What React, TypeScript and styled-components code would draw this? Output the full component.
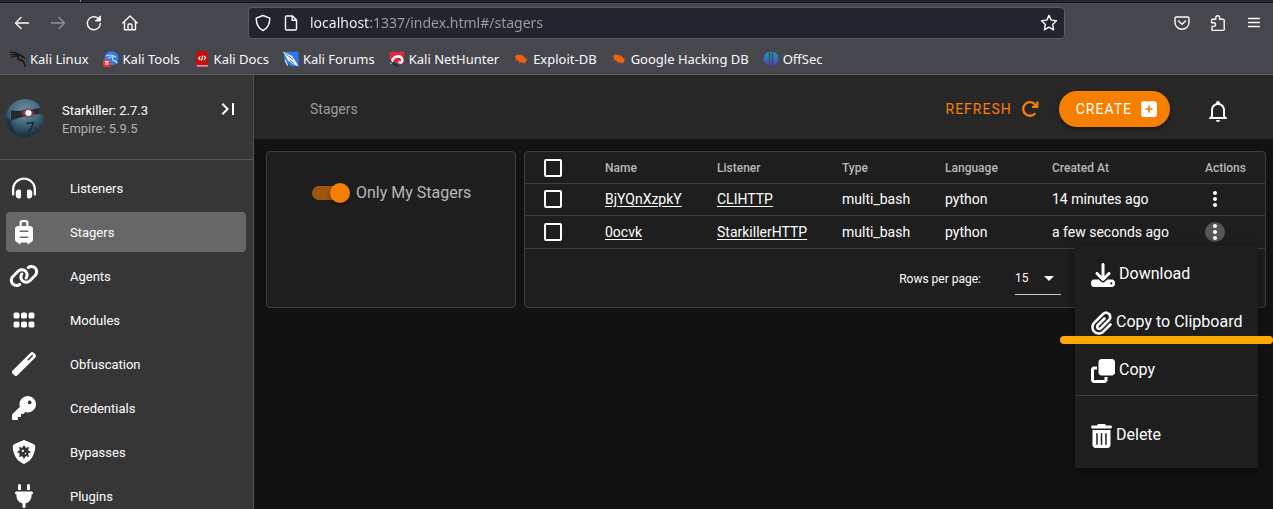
import React from "react";
import styled, { createGlobalStyle, css } from "styled-components";
import {
  FaArrowRotateRight,
  FaClone,
  FaDownload,
  FaGrip,
  FaHeadphonesSimple,
  FaKey,
  FaLink,
  FaPaperclip,
  FaPlug,
  FaShieldVirus,
  FaSquarePlus,
  FaSuitcaseRolling,
  FaTrashCan,
  FaWandMagic,
} from "react-icons/fa6";
import { MdLastPage, MdMoreVert, MdArrowDropDown } from "react-icons/md";

const orange = "#f77f00";
const line = "#3e3e3e";
const surface = "#1e1e1e";

const GlobalStyle = createGlobalStyle`
  *, *::before, *::after { box-sizing: border-box; }
  body {
    margin: 0;
    background: #121212;
    color: #fff;
    font-family: Roboto, "Liberation Sans", sans-serif;
    font-size: 14px;
  }
  button, input, select { font: inherit; color: inherit; }
  button { border: 0; padding: 0; background: none; cursor: pointer; }
  svg { display: block; flex: none; }
`;

/* ---------- window ---------- */

const Window = styled.div`
  display: flex;
  flex-direction: column;
  height: 100vh;
  overflow: hidden;
`;

const Browser = styled.header`
  flex: none;
  background: #45474d;
  border-bottom: 1px solid #5c5d61;
  color: #fbfbfe;
  font-family: "Noto Sans", sans-serif;
`;

const TabStrip = styled.div`
  height: 3px;
  padding-left: 80px;
  background: #23252e;
  border-bottom: 1px solid #17181d;
`;

const TabEdge = styled.div`
  width: 1px;
  height: 2px;
  background: #8a8b90;
`;

const NavBar = styled.div`
  display: flex;
  align-items: center;
  height: 40px;
  padding: 0 1px 0 4px;
`;

const NavButton = styled.button<{ $dim?: boolean }>`
  display: grid;
  place-items: center;
  width: 36px;
  height: 32px;
  opacity: ${(p) => (p.$dim ? 0.4 : 1)};
`;

const UrlBar = styled.div`
  display: flex;
  align-items: center;
  flex: 1;
  min-width: 0;
  height: 32px;
  margin: 0 99px 0 100px;
  padding: 0 6px 0 5px;
  gap: 10px;
  background: #23252e;
  border: 1px solid #5c5d62;
  border-radius: 4px;
`;

const UrlInput = styled.input`
  flex: 1;
  min-width: 0;
  padding: 0;
  border: 0;
  outline: 0;
  font-size: 14px;
  line-height: 20px;
  color: transparent;
  background: linear-gradient(90deg, #fbfbfe 60px, #9d9ea3 60px);
  background-clip: text;
  -webkit-background-clip: text;
`;

const Bookmarks = styled.nav`
  display: flex;
  align-items: center;
  gap: 14px;
  height: 31px;
  padding: 0 10px;
`;

const Bookmark = styled.a`
  display: flex;
  align-items: center;
  gap: 4px;
  color: inherit;
  font-size: 13px;
  line-height: 18px;
  text-decoration: none;
  white-space: nowrap;
`;

/* ---------- application ---------- */

const Shell = styled.div`
  display: flex;
  flex: 1;
  min-height: 0;
`;

const Sidebar = styled.aside`
  flex: none;
  width: 254px;
  overflow: hidden;
  background: #363636;
  border-right: 1px solid #525252;
`;

const Brand = styled.div`
  display: flex;
  align-items: flex-start;
  height: 85px;
  padding: 22px 13px 0 6px;
  border-bottom: 1px solid #555;
`;

const BrandMark = styled.div`
  padding-top: 2px;
`;

const BrandText = styled.div`
  flex: 1;
  padding: 5px 0 0 18px;
  font-size: 13px;
  line-height: 18px;
`;

const BrandSub = styled.div`
  color: #b0b0b0;
`;

const NavList = styled.nav`
  display: flex;
  flex-direction: column;
  gap: 4px;
  padding: 8px 7px 8px 6px;
`;

const NavItem = styled.a<{ $active?: boolean }>`
  display: grid;
  grid-template-columns: 36px 1fr;
  align-items: center;
  column-gap: 28px;
  height: 40px;
  border-radius: 4px;
  color: #fff;
  font-size: 13px;
  text-decoration: none;
  background: ${(p) => (p.$active ? "#676767" : "transparent")};
  svg {
    width: 30px;
    height: 24px;
    justify-self: center;
  }
`;

const Main = styled.main`
  flex: 1;
  min-width: 0;
`;

const AppBar = styled.div`
  display: flex;
  align-items: center;
  height: 64px;
  padding: 4px 43px 0 56px;
  background: #272727;
`;

const Title = styled.h1`
  flex: 1;
  margin: 0;
  color: #9a9a9a;
  font-size: 14px;
  font-weight: 400;
`;

const ActionButton = styled.button<{ $filled?: boolean }>`
  display: flex;
  align-items: center;
  gap: 9px;
  height: 36px;
  font-size: 14px;
  letter-spacing: 1px;
  color: ${orange};
  svg {
    width: 18px;
    height: 18px;
  }
  ${(p) =>
    p.$filled &&
    css`
      margin: 0 36px 0 20px;
      padding: 0 13px 0 17px;
      border-radius: 18px;
      background: ${orange};
      color: #fff;
      box-shadow: 0 2px 4px rgba(0, 0, 0, 0.4);
      svg { width: 16px; }
    `}
`;

const BellButton = styled.button`
  padding-top: 4px;
`;

const Content = styled.div`
  display: grid;
  grid-template-columns: 250px minmax(0, 1fr);
  gap: 8px;
  padding: 12px 7px 12px 12px;
`;

const Card = styled.section`
  background: ${surface};
  border: 1px solid ${line};
  border-radius: 4px;
`;

const SwitchLabel = styled.label`
  display: flex;
  align-items: center;
  gap: 6px;
  padding: 30px 0 0 45px;
  color: #b8b8b8;
  font-size: 16px;
  line-height: 21px;
`;

const Switch = styled.input`
  appearance: none;
  display: flex;
  align-items: center;
  justify-content: flex-end;
  width: 38px;
  height: 20px;
  margin: 0;
  &::before {
    content: "";
    flex: 1;
    height: 14px;
    margin-right: -10px;
    border-radius: 7px;
    background: #9c560f;
  }
  &::after {
    content: "";
    z-index: 1;
    width: 20px;
    height: 20px;
    border-radius: 50%;
    background: ${orange};
    box-shadow: 0 2px 4px rgba(0, 0, 0, 0.4);
  }
`;

const Table = styled.table`
  width: 100%;
  table-layout: fixed;
  border-collapse: collapse;
  line-height: 20px;
  th, td {
    height: 32px;
    padding: 0 0 0 16px;
    border-bottom: 1px solid ${line};
    text-align: left;
    white-space: nowrap;
  }
  th {
    height: 31px;
    padding-top: 2px;
    color: #b8b8b8;
    font-size: 12px;
    font-weight: 500;
  }
  tr:last-child td { height: 33px; }
`;

const Check = styled.input`
  appearance: none;
  display: block;
  width: 18px;
  height: 18px;
  margin: 0 0 0 3px;
  border: 2px solid #fff;
  border-radius: 2px;
`;

const CellLink = styled.a`
  color: #fff;
  text-decoration: underline;
  text-underline-offset: 2px;
`;

const Actions = styled.div`
  position: relative;
  width: 20px;
  height: 20px;
`;

const DotsButton = styled.button<{ $open?: boolean }>`
  display: grid;
  place-content: center;
  width: 20px;
  height: 20px;
  border-radius: 50%;
  background: ${(p) => (p.$open ? "#565656" : "transparent")};
`;

const Menu = styled.ul`
  position: absolute;
  z-index: 2;
  top: calc(100% + 3px);
  right: -33px;
  width: 183px;
  margin: 0;
  padding: 5px 0 9px;
  list-style: none;
  background: ${surface};
  box-shadow: 0 3px 10px rgba(0, 0, 0, 0.45);
`;

const MenuRow = styled.li<{ $divided?: boolean }>`
  position: relative;
  ${(p) =>
    p.$divided &&
    css`
      margin-top: 1px;
      padding-top: 15px;
      border-top: 1px solid ${line};
    `}
`;

const MenuButton = styled.button<{ $narrow?: boolean }>`
  display: flex;
  align-items: center;
  gap: 4px;
  width: 100%;
  height: 48px;
  padding: 0 0 0 16px;
  font-size: 16px;
  line-height: 24px;
  svg {
    width: ${(p) => (p.$narrow ? 21 : 24)}px;
    height: 24px;
    margin-top: 2px;
  }
`;

const Marker = styled.span`
  position: absolute;
  z-index: 1;
  left: -15px;
  right: -15px;
  bottom: 2px;
  height: 8px;
  border-radius: 4px;
  background: #ffa802;
`;

const TableFooter = styled.div`
  display: flex;
  align-items: center;
  justify-content: flex-end;
  gap: 34px;
  height: 58px;
  padding: 2px 204px 0 0;
  font-size: 12px;
`;

const SelectBox = styled.div`
  display: grid;
  align-items: center;
  width: 46px;
  height: 32px;
  border-bottom: 1px solid #c8c8c8;
  > * { grid-area: 1 / 1; }
  svg { justify-self: end; pointer-events: none; }
`;

const Select = styled.select`
  appearance: none;
  width: 100%;
  padding: 0;
  border: 0;
  outline: 0;
  background: transparent;
  option { background: ${surface}; }
`;

/* ---------- drawings ---------- */

const Stroke = ({ children, size = 18 }: { children: React.ReactNode; size?: number }) => (
  <svg
    width={size}
    height={size}
    viewBox="0 0 18 18"
    fill="none"
    stroke="currentColor"
    strokeWidth="1.4"
    strokeLinecap="round"
    strokeLinejoin="round"
    aria-hidden="true"
  >
    {children}
  </svg>
);

const BackIcon = () => <Stroke><path d="M15.5 9H2.5M8 3.5L2.5 9L8 14.5" /></Stroke>;
const ForwardIcon = () => <Stroke><path d="M2.5 9H15.5M10 3.5L15.5 9L10 14.5" /></Stroke>;
const ReloadIcon = () => (
  <Stroke>
    <path d="M15.3 9.5A6.5 6.5 0 1 1 13 4.3" />
    <path d="M15.5 2.2V7H10.7Z" fill="currentColor" strokeWidth="1" />
  </Stroke>
);
const HomeIcon = () => (
  <Stroke>
    <path d="M1.8 9L9 2L16.2 9M3.5 7.5V15.8H14.5V7.5M7 15.5V11.2Q7 10 8 10H10Q11 10 11 11.2V15.5" />
  </Stroke>
);
const ShieldIcon = () => (
  <Stroke><path d="M9 1.5L15.8 4.2C15.8 9.5 14.3 14 9 16.5C3.7 14 2.2 9.5 2.2 4.2Z" /></Stroke>
);
const PageIcon = () => (
  <Stroke><path d="M4.5 2H10.5L14.5 6V14.8Q14.5 16 13.3 16H4.7Q3.5 16 3.5 14.8V3Q3.5 2 4.5 2ZM10.2 2.2V6.3H14.3" /></Stroke>
);
const StarIcon = () => (
  <Stroke>
    <path d="M9 1.4L11.2 6.1L16.4 6.8L12.6 10.4L13.6 15.9L9 13.2L4.4 15.9L5.4 10.4L1.6 6.8L6.8 6.1Z" />
  </Stroke>
);
const PocketIcon = () => (
  <Stroke>
    <path d="M3.3 3H14.7Q16 3 16 4.3V8.5A7 6.8 0 0 1 2 8.5V4.3Q2 3 3.3 3Z" />
    <path d="M5.5 7L9 10.3L12.5 7" />
  </Stroke>
);
const PuzzleIcon = () => (
  <Stroke>
    <path d="M3 5.2H6.8V3.6A1.9 1.9 0 0 1 10.6 3.6V5.2H14.2Q15.2 5.2 15.2 6.2V15.4Q15.2 16.4 14.2 16.4H4Q3 16.4 3 15.4V12.4H4.8A1.7 1.7 0 0 0 4.8 8.8H2.6V6Q2.6 5.2 3.4 5.2" />
  </Stroke>
);
const BurgerIcon = () => <Stroke><path d="M3.5 4.5H14.5M3.5 8.5H14.5M3.5 12.5H14.5" strokeWidth="1.3" /></Stroke>;

const KaliDragon = () => (
  <svg width="16" height="16" viewBox="0 0 16 16" fill="none" stroke="#15161a" strokeLinecap="round">
    <path d="M.5 1.2Q5 .8 8.8 3.4M1 3.8Q4 2.6 8 4M1.5 6.2Q4 4.4 7.5 5" strokeWidth="1.2" />
    <path d="M7 3.5Q11 3.4 13.8 6.2M8.4 4.2Q6.5 7.8 10.4 8.9Q14.5 9.8 15 15.2" strokeWidth="1.6" />
    <path d="M11 5.2L15.2 7.2" strokeWidth="1.2" />
  </svg>
);
const KaliTools = () => (
  <svg width="16" height="16" viewBox="0 0 16 16">
    <circle cx="8.5" cy="7.2" r="7" fill="#2f7df0" />
    <path d="M3 5Q8 2.4 13 6.2M5 7.4Q8 5 10 6Q8.5 9 11 9.6Q13.6 10 14 12.5" fill="none" stroke="#cfe1fb" strokeWidth="1.1" />
    <rect x="0" y="8.5" width="7.5" height="7.5" rx="2.5" fill="#e53935" />
    <path d="M1.8 10.6H5.8M3 10.6V14M4.8 10.6V14" stroke="#fff" strokeWidth=".9" />
  </svg>
);
const KaliDocs = () => (
  <svg width="16" height="16" viewBox="0 0 16 16">
    <path d="M2 1.5Q2 .3 3.2 .3H14V15.7H3Q2 15.7 2 14.5Z" fill="#c50d0d" />
    <path d="M2.4 14.2H14V15.4H3Z" fill="#d9c9c9" />
    <path d="M6.4 5.5L4.6 7.3L6.4 9M10 5L11.7 6.8L10 8.8M8.8 4.6L7.5 9.6" fill="none" stroke="#fff" strokeWidth="1.1" />
  </svg>
);
const KaliForums = () => (
  <svg width="16" height="16" viewBox="0 0 16 16">
    <path d="M3 .8H15.5V15.2H8L1 9V3Z" fill="#2a7df0" />
    <path d="M0 .5L9 5L12 9.5L15.5 15.2L10 13L5 9.5L2.8 5.4Z" fill="#f4f6fa" />
    <path d="M2 2.4L10 8.5M6.5 9L11 12.4" stroke="#44474e" strokeWidth=".8" />
    <path d="M2.2 9L4.6 14.5" stroke="#e8ecf3" strokeWidth="1.1" />
  </svg>
);
const KaliHunter = () => (
  <svg width="16" height="16" viewBox="0 0 16 16">
    <path d="M1 .8H15.5L14.4 13H10L0 8Z" fill="#e0283a" />
    <path d="M2.4 12.6Q3.4 6 8.4 5.2Q13.4 5.2 13.4 9.6Q12.6 13 9.4 10.8" fill="none" stroke="#fff" strokeWidth="2.4" />
    <path d="M.8 9Q4 14 9.6 15" fill="none" stroke="#1f2026" strokeWidth="1.3" />
  </svg>
);
const BugIcon = () => (
  <svg width="16" height="16" viewBox="0 0 16 16">
    <path d="M1 5L5 6M4 2.5L7 5.5M9 3L9.5 6M1.5 9.5L5 8M6 13L8 10M12 13.5L11 10M15 8L12 8.5" stroke="#9c5a3c" strokeWidth=".9" />
    <ellipse cx="8" cy="7.8" rx="6" ry="3.4" transform="rotate(28 8 7.8)" fill="#f2600f" />
  </svg>
);
const OffSecIcon = () => (
  <svg width="16" height="16" viewBox="0 0 16 16">
    <defs>
      <linearGradient id="offsec" x1="0" y1="0" x2="0" y2="1">
        <stop offset="0" stopColor="#13a5b5" />
        <stop offset="1" stopColor="#5a35d0" />
      </linearGradient>
    </defs>
    <path d="M5.8 .8V14.5Q.6 12.5 .6 7.8Q.6 2.6 5.8 .8ZM7.2 .4H8.8V15.6H7.2ZM10.2 .8Q15.4 2.6 15.4 7.8Q15.4 12.5 10.2 14.5Z" fill="url(#offsec)" />
  </svg>
);

const Avatar = () => (
  <svg width="38" height="38" viewBox="0 0 38 38" role="img" aria-label="Starkiller">
    <defs>
      <radialGradient id="planet" cx=".5" cy=".3" r=".72">
        <stop offset="0" stopColor="#6c90a3" />
        <stop offset=".5" stopColor="#44697e" />
        <stop offset="1" stopColor="#152735" />
      </radialGradient>
      <radialGradient id="flare">
        <stop offset="0" stopColor="#ffe9e9" />
        <stop offset=".3" stopColor="#e0525c" />
        <stop offset=".6" stopColor="#8f2c3a" stopOpacity=".7" />
        <stop offset="1" stopColor="#5c2833" stopOpacity="0" />
      </radialGradient>
      <clipPath id="disc">
        <path d="M19 0A19 19 0 0 1 34.6 8L32.5 10L34 15.5L37.8 16.5A19 19 0 1 1 19 0Z" />
      </clipPath>
    </defs>
    <g clipPath="url(#disc)">
      <rect width="38" height="38" fill="url(#planet)" />
      <path d="M5 11.5Q18 13 34 9L34 15Q22 15.5 14 18.5L5 21.5Z" fill="#242833" />
      <path d="M0 17L5 21Q5 29 13 38H0Z" fill="#132736" opacity=".55" />
      <path d="M20 24.5L27.5 23.5L25.5 29L22 33" fill="none" stroke="#162a38" strokeWidth="1.5" />
      <circle cx="29.5" cy="29" r="1" fill="#162a38" />
      <ellipse cx="22" cy="14" rx="9" ry="5" fill="url(#flare)" />
      <circle cx="22.5" cy="14" r="3" fill="#fff" />
    </g>
  </svg>
);

const BellIcon = () => (
  <svg width="24" height="24" viewBox="0 0 24 24" fill="currentColor" aria-hidden="true">
    <path d="M10,21H14A2,2 0 0,1 12,23A2,2 0 0,1 10,21M21,19V20H3V19L5,17V11C5,7.9 7.03,5.17 10,4.29C10,4.19 10,4.1 10,4A2,2 0 0,1 12,2A2,2 0 0,1 14,4C14,4.1 14,4.19 14,4.29C16.97,5.17 19,7.9 19,11V17L21,19M17,11A5,5 0 0,0 12,6A5,5 0 0,0 7,11V18H17V11Z" />
  </svg>
);

/* ---------- data ---------- */

const bookmarks = [
  { label: "Kali Linux", Icon: KaliDragon },
  { label: "Kali Tools", Icon: KaliTools },
  { label: "Kali Docs", Icon: KaliDocs },
  { label: "Kali Forums", Icon: KaliForums },
  { label: "Kali NetHunter", Icon: KaliHunter },
  { label: "Exploit-DB", Icon: BugIcon },
  { label: "Google Hacking DB", Icon: BugIcon },
  { label: "OffSec", Icon: OffSecIcon },
];

const sections = [
  { label: "Listeners", Icon: FaHeadphonesSimple },
  { label: "Stagers", Icon: FaSuitcaseRolling },
  { label: "Agents", Icon: FaLink },
  { label: "Modules", Icon: FaGrip },
  { label: "Obfuscation", Icon: FaWandMagic },
  { label: "Credentials", Icon: FaKey },
  { label: "Bypasses", Icon: FaShieldVirus },
  { label: "Plugins", Icon: FaPlug },
];

const stagers = [
  { name: "BjYQnXzpkY", listener: "CLIHTTP", type: "multi_bash", language: "python", created: "14 minutes ago", open: false },
  { name: "0ocvk", listener: "StarkillerHTTP", type: "multi_bash", language: "python", created: "a few seconds ago", open: true },
];

const menuItems = [
  { label: "Download", Icon: FaDownload },
  { label: "Copy to Clipboard", Icon: FaPaperclip, narrow: true, marked: true },
  { label: "Copy", Icon: FaClone },
  { label: "Delete", Icon: FaTrashCan, narrow: true, divided: true },
];

/* ---------- parts ---------- */

const RowMenu = () => (
  <Menu>
    {menuItems.map(({ label, Icon, narrow, marked, divided }) => (
      <MenuRow key={label} $divided={divided}>
        <MenuButton type="button" $narrow={narrow}><Icon />{label}</MenuButton>
        {marked && <Marker />}
      </MenuRow>
    ))}
  </Menu>
);

const StagerTable = () => (
  <Table>
    <colgroup>
      <col width="64" />
      <col width="112" />
      <col width="125" />
      <col width="103" />
      <col width="107" />
      <col />
      <col width="76" />
    </colgroup>
    <thead>
      <tr>
        <th><Check type="checkbox" aria-label="Select all" /></th>
        <th>Name</th>
        <th>Listener</th>
        <th>Type</th>
        <th>Language</th>
        <th>Created At</th>
        <th>Actions</th>
      </tr>
    </thead>
    <tbody>
      {stagers.map((s) => (
        <tr key={s.name}>
          <td><Check type="checkbox" aria-label={`Select ${s.name}`} /></td>
          <td><CellLink href="#">{s.name}</CellLink></td>
          <td><CellLink href="#">{s.listener}</CellLink></td>
          <td>{s.type}</td>
          <td>{s.language}</td>
          <td>{s.created}</td>
          <td>
            <Actions>
              <DotsButton type="button" $open={s.open} aria-label={`Actions for ${s.name}`}>
                <MdMoreVert size={24} />
              </DotsButton>
              {s.open && <RowMenu />}
            </Actions>
          </td>
        </tr>
      ))}
    </tbody>
  </Table>
);

export default function App() {
  return (
    <Window>
      <GlobalStyle />
      <Browser>
        <TabStrip><TabEdge /></TabStrip>
        <NavBar>
          <NavButton aria-label="Back"><BackIcon /></NavButton>
          <NavButton aria-label="Forward" $dim><ForwardIcon /></NavButton>
          <NavButton aria-label="Reload"><ReloadIcon /></NavButton>
          <NavButton aria-label="Home"><HomeIcon /></NavButton>
          <UrlBar>
            <ShieldIcon />
            <PageIcon />
            <UrlInput aria-label="Address" defaultValue="localhost:1337/index.html#/stagers" />
            <StarIcon />
          </UrlBar>
          <NavButton aria-label="Pocket"><PocketIcon /></NavButton>
          <NavButton aria-label="Extensions"><PuzzleIcon /></NavButton>
          <NavButton aria-label="Menu"><BurgerIcon /></NavButton>
        </NavBar>
        <Bookmarks aria-label="Bookmarks">
          {bookmarks.map(({ label, Icon }) => (
            <Bookmark key={label} href="#"><Icon />{label}</Bookmark>
          ))}
        </Bookmarks>
      </Browser>
      <Shell>
        <Sidebar>
          <Brand>
            <BrandMark><Avatar /></BrandMark>
            <BrandText>
              <div>Starkiller: 2.7.3</div>
              <BrandSub>Empire: 5.9.5</BrandSub>
            </BrandText>
            <button type="button" aria-label="Collapse sidebar"><MdLastPage size={24} /></button>
          </Brand>
          <NavList aria-label="Sections">
            {sections.map(({ label, Icon }) => (
              <NavItem key={label} href="#" $active={label === "Stagers"}><Icon />{label}</NavItem>
            ))}
          </NavList>
        </Sidebar>
        <Main>
          <AppBar>
            <Title>Stagers</Title>
            <ActionButton type="button">REFRESH <FaArrowRotateRight /></ActionButton>
            <ActionButton type="button" $filled>CREATE <FaSquarePlus /></ActionButton>
            <BellButton type="button" aria-label="Notifications"><BellIcon /></BellButton>
          </AppBar>
          <Content>
            <Card>
              <SwitchLabel>
                <Switch type="checkbox" role="switch" defaultChecked />
                Only My Stagers
              </SwitchLabel>
            </Card>
            <Card>
              <StagerTable />
              <TableFooter>
                <label htmlFor="rows">Rows per page:</label>
                <SelectBox>
                  <Select id="rows" defaultValue="15">
                    <option>15</option>
                    <option>30</option>
                  </Select>
                  <MdArrowDropDown size={24} />
                </SelectBox>
              </TableFooter>
            </Card>
          </Content>
        </Main>
      </Shell>
    </Window>
  );
}
